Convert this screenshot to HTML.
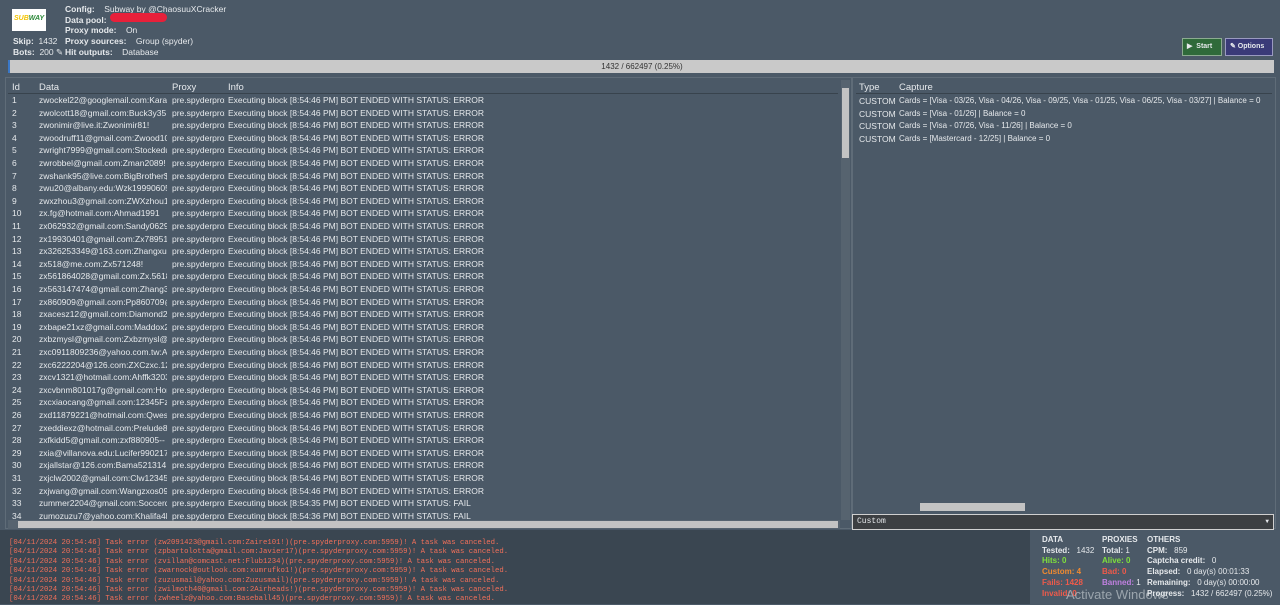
<!DOCTYPE html><html><head><style>
*{margin:0;padding:0;box-sizing:border-box}
body{width:1280px;height:604px;background:#4b5967;font-family:"Liberation Sans",sans-serif;color:#e6e9ec;font-size:8.5px;position:relative;overflow:hidden}
.a{position:absolute;white-space:nowrap}
b{font-weight:bold}
.row{position:absolute;left:8px;height:12.6px;line-height:12.6px;width:832px}
.row span{position:absolute;overflow:hidden;white-space:nowrap}
.c1{left:4px;width:28px}.c2{left:31px;width:128px}.c3{left:164px;width:53px}.c4{left:220px}
.log{position:absolute;left:0;top:530px;width:1030px;height:74px;background:#3a4651;font-family:"Liberation Mono",monospace;font-size:7.3px;color:#f2705a;padding:9px 0 0 9px;line-height:9.4px}
</style></head><body>
<div class="a" style="left:12px;top:9px;width:34px;height:22px;background:#fff"></div>
<div class="a" style="left:14px;top:15px;font-size:7px;font-weight:bold;color:#f3c400;font-style:italic">SUB<span style="color:#2d8a3a">WAY</span></div>
<div class="a" style="left:65px;top:4px;line-height:10.7px"><b>Config:</b>&nbsp;&nbsp;&nbsp; Subway by @ChaosuuXCracker<br><b>Data pool:</b><br><b>Proxy mode:</b>&nbsp;&nbsp;&nbsp; On<br><b>Proxy sources:</b>&nbsp;&nbsp;&nbsp; Group (spyder)<br><b>Hit outputs:</b>&nbsp;&nbsp;&nbsp; Database</div>
<div class="a" style="left:110px;top:13px;width:57px;height:9px;background:#e8203a;border-radius:5px"></div>
<div class="a" style="left:13px;top:36px;line-height:10.7px"><b>Skip:</b>&nbsp; 1432<br><b>Bots:</b>&nbsp; 200 ✎</div>
<div class="a" style="left:1182px;top:38px;width:40px;height:18px;background:#2f6a3a;border:1px solid #8cab90;font-size:7px;font-weight:bold;line-height:16px;padding-left:4px">▶&nbsp; Start</div>
<div class="a" style="left:1225px;top:38px;width:48px;height:18px;background:#3a3a78;border:1px solid #9a9ac0;font-size:7px;font-weight:bold;line-height:16px;padding-left:4px">✎ Options</div>
<div class="a" style="left:8px;top:60px;width:1266px;height:13px;background:#c9c9c9;border-left:2px solid #3a78c8;color:#333;text-align:center;line-height:13px;font-size:8px">1432 / 662497 (0.25%)</div>
<div class="a" style="left:5px;top:77px;width:847px;height:452px;border:1px solid #5f6c78"></div>
<div class="a" style="left:852px;top:77px;width:424px;height:452px;border:1px solid #5f6c78"></div>
<div class="a" style="left:12px;top:82px;font-size:9.5px">Id</div>
<div class="a" style="left:39px;top:82px;font-size:9.5px">Data</div>
<div class="a" style="left:172px;top:82px;font-size:9.5px">Proxy</div>
<div class="a" style="left:228px;top:82px;font-size:9.5px">Info</div>
<div class="a" style="left:8px;top:93px;width:830px;height:1px;background:#38434d"></div>
<div class="a" style="left:841px;top:80px;width:9px;height:440px;background:#56636f"></div>
<div class="a" style="left:842px;top:88px;width:7px;height:70px;background:#c3c3c3"></div>
<div class="a" style="left:8px;top:520px;width:832px;height:9px;background:#56636f"></div>
<div class="a" style="left:18px;top:521px;width:820px;height:7px;background:#c3c3c3"></div>
<div id="rows"></div>
<div class="a" style="left:859px;top:82px;font-size:9.5px">Type</div>
<div class="a" style="left:899px;top:82px;font-size:9.5px">Capture</div>
<div class="a" style="left:856px;top:93px;width:416px;height:1px;background:#38434d"></div>
<div class="a" style="left:859px;top:95px;line-height:12.6px">CUSTOM<br>CUSTOM<br>CUSTOM<br>CUSTOM</div>
<div class="a" style="left:899px;top:95px;line-height:12.6px;font-size:8px">Cards = [Visa - 03/26, Visa - 04/26, Visa - 09/25, Visa - 01/25, Visa - 06/25, Visa - 03/27] | Balance = 0<br>Cards = [Visa - 01/26] | Balance = 0<br>Cards = [Visa - 07/26, Visa - 11/26] | Balance = 0<br>Cards = [Mastercard - 12/25] | Balance = 0</div>
<div class="a" style="left:920px;top:503px;width:105px;height:8px;background:#c3c3c3"></div>
<div class="a" style="left:852px;top:514px;width:422px;height:16px;background:#3c3f42;border:1px solid #d0d0d0;font-family:'Liberation Mono',monospace;font-size:8px;line-height:14px;padding-left:4px">Custom<span style="position:absolute;right:4px;font-size:6px">▼</span></div>
<div class="log">[04/11/2024 20:54:46] Task error (zw2091423@gmail.com:Zaire101!)(pre.spyderproxy.com:5959)! A task was canceled.<br>[04/11/2024 20:54:46] Task error (zpbartolotta@gmail.com:Javier17)(pre.spyderproxy.com:5959)! A task was canceled.<br>[04/11/2024 20:54:46] Task error (zvillan@comcast.net:Flub1234)(pre.spyderproxy.com:5959)! A task was canceled.<br>[04/11/2024 20:54:46] Task error (zwarnock@outlook.com:xumrufko1!)(pre.spyderproxy.com:5959)! A task was canceled.<br>[04/11/2024 20:54:46] Task error (zuzusmail@yahoo.com:Zuzusmail)(pre.spyderproxy.com:5959)! A task was canceled.<br>[04/11/2024 20:54:46] Task error (zwilmoth40@gmail.com:2Airheads!)(pre.spyderproxy.com:5959)! A task was canceled.<br>[04/11/2024 20:54:46] Task error (zwheelz@yahoo.com:Baseball45)(pre.spyderproxy.com:5959)! A task was canceled.</div>
<div class="a" style="left:1042px;top:535px;line-height:10.7px;font-size:8px"><b>DATA</b><br><b>Tested:</b>&nbsp;&nbsp; 1432<br><b style="color:#7fe03c">Hits: 0</b><br><b style="color:#f08a30">Custom: 4</b><br><b style="color:#f05a4a">Fails: 1428</b><br><b style="color:#f05a4a">Invalid: 0</b></div>
<div class="a" style="left:1102px;top:535px;line-height:10.7px;font-size:8px"><b>PROXIES</b><br><b>Total:</b> 1<br><b style="color:#7fe03c">Alive: 0</b><br><b style="color:#f05a4a">Bad: 0</b><br><b style="color:#c080e0">Banned:</b> 1</div>
<div class="a" style="left:1147px;top:535px;line-height:10.7px;font-size:8px"><b>OTHERS</b><br><b>CPM:</b>&nbsp;&nbsp; 859<br><b>Captcha credit:</b>&nbsp;&nbsp; 0<br><b>Elapsed:</b>&nbsp;&nbsp; 0 day(s) 00:01:33<br><b>Remaining:</b>&nbsp;&nbsp; 0 day(s) 00:00:00<br><b>Progress:</b>&nbsp;&nbsp; 1432 / 662497 (0.25%)</div>
<div class="a" style="left:1066px;top:587px;font-size:13px;color:rgba(220,225,230,0.55)">Activate Windows</div>
<script>
var d=["zwockel22@googlemail.com:Karate","zwolcott18@gmail.com:Buck3y35","zwonimir@live.it:Zwonimir81!","zwoodruff11@gmail.com:Zwood101","zwright7999@gmail.com:Stockedup","zwrobbel@gmail.com:Zman2089!","zwshank95@live.com:BigBrother$1","zwu20@albany.edu:Wzk19990605!","zwxzhou3@gmail.com:ZWXzhou18","zx.fg@hotmail.com:Ahmad1991","zx062932@gmail.com:Sandy0629","zx19930401@gmail.com:Zx7895123","zx326253349@163.com:Zhangxu97","zx518@me.com:Zx571248!","zx561864028@gmail.com:Zx.561864","zx563147474@gmail.com:Zhang364","zx860909@gmail.com:Pp860709@","zxacesz12@gmail.com:Diamond2","zxbape21xz@gmail.com:Maddox21","zxbzmysl@gmail.com:Zxbzmysl@12","zxc0911809236@yahoo.com.tw:Azs","zxc6222204@126.com:ZXCzxc.1234","zxcv1321@hotmail.com:Ahffk32031","zxcvbnm801017g@gmail.com:Hom","zxcxiaocang@gmail.com:12345Fzc.","zxd11879221@hotmail.com:Qwesde","zxeddiexz@hotmail.com:Prelude85","zxfkidd5@gmail.com:zxf880905--","zxia@villanova.edu:Lucifer990217@","zxjallstar@126.com:Bama521314","zxjclw2002@gmail.com:Clw123456","zxjwang@gmail.com:Wangzxos0909","zummer2204@gmail.com:Soccerdu","zumozuzu7@yahoo.com:Khalifa4l2"];
var h="";for(var i=0;i<34;i++){var f=i>=32,t=f?(i==32?"8:54:35":"8:54:36"):"8:54:46";h+='<div class="row" style="top:'+(94+i*12.6)+'px"><span class="c1">'+(i+1)+'</span><span class="c2">'+d[i]+'</span><span class="c3">pre.spyderproxy</span><span class="c4">Executing block ['+t+' PM] BOT ENDED WITH STATUS: '+(f?"FAIL":"ERROR")+'</span></div>';}
document.getElementById("rows").innerHTML=h;
</script>
</body></html>
